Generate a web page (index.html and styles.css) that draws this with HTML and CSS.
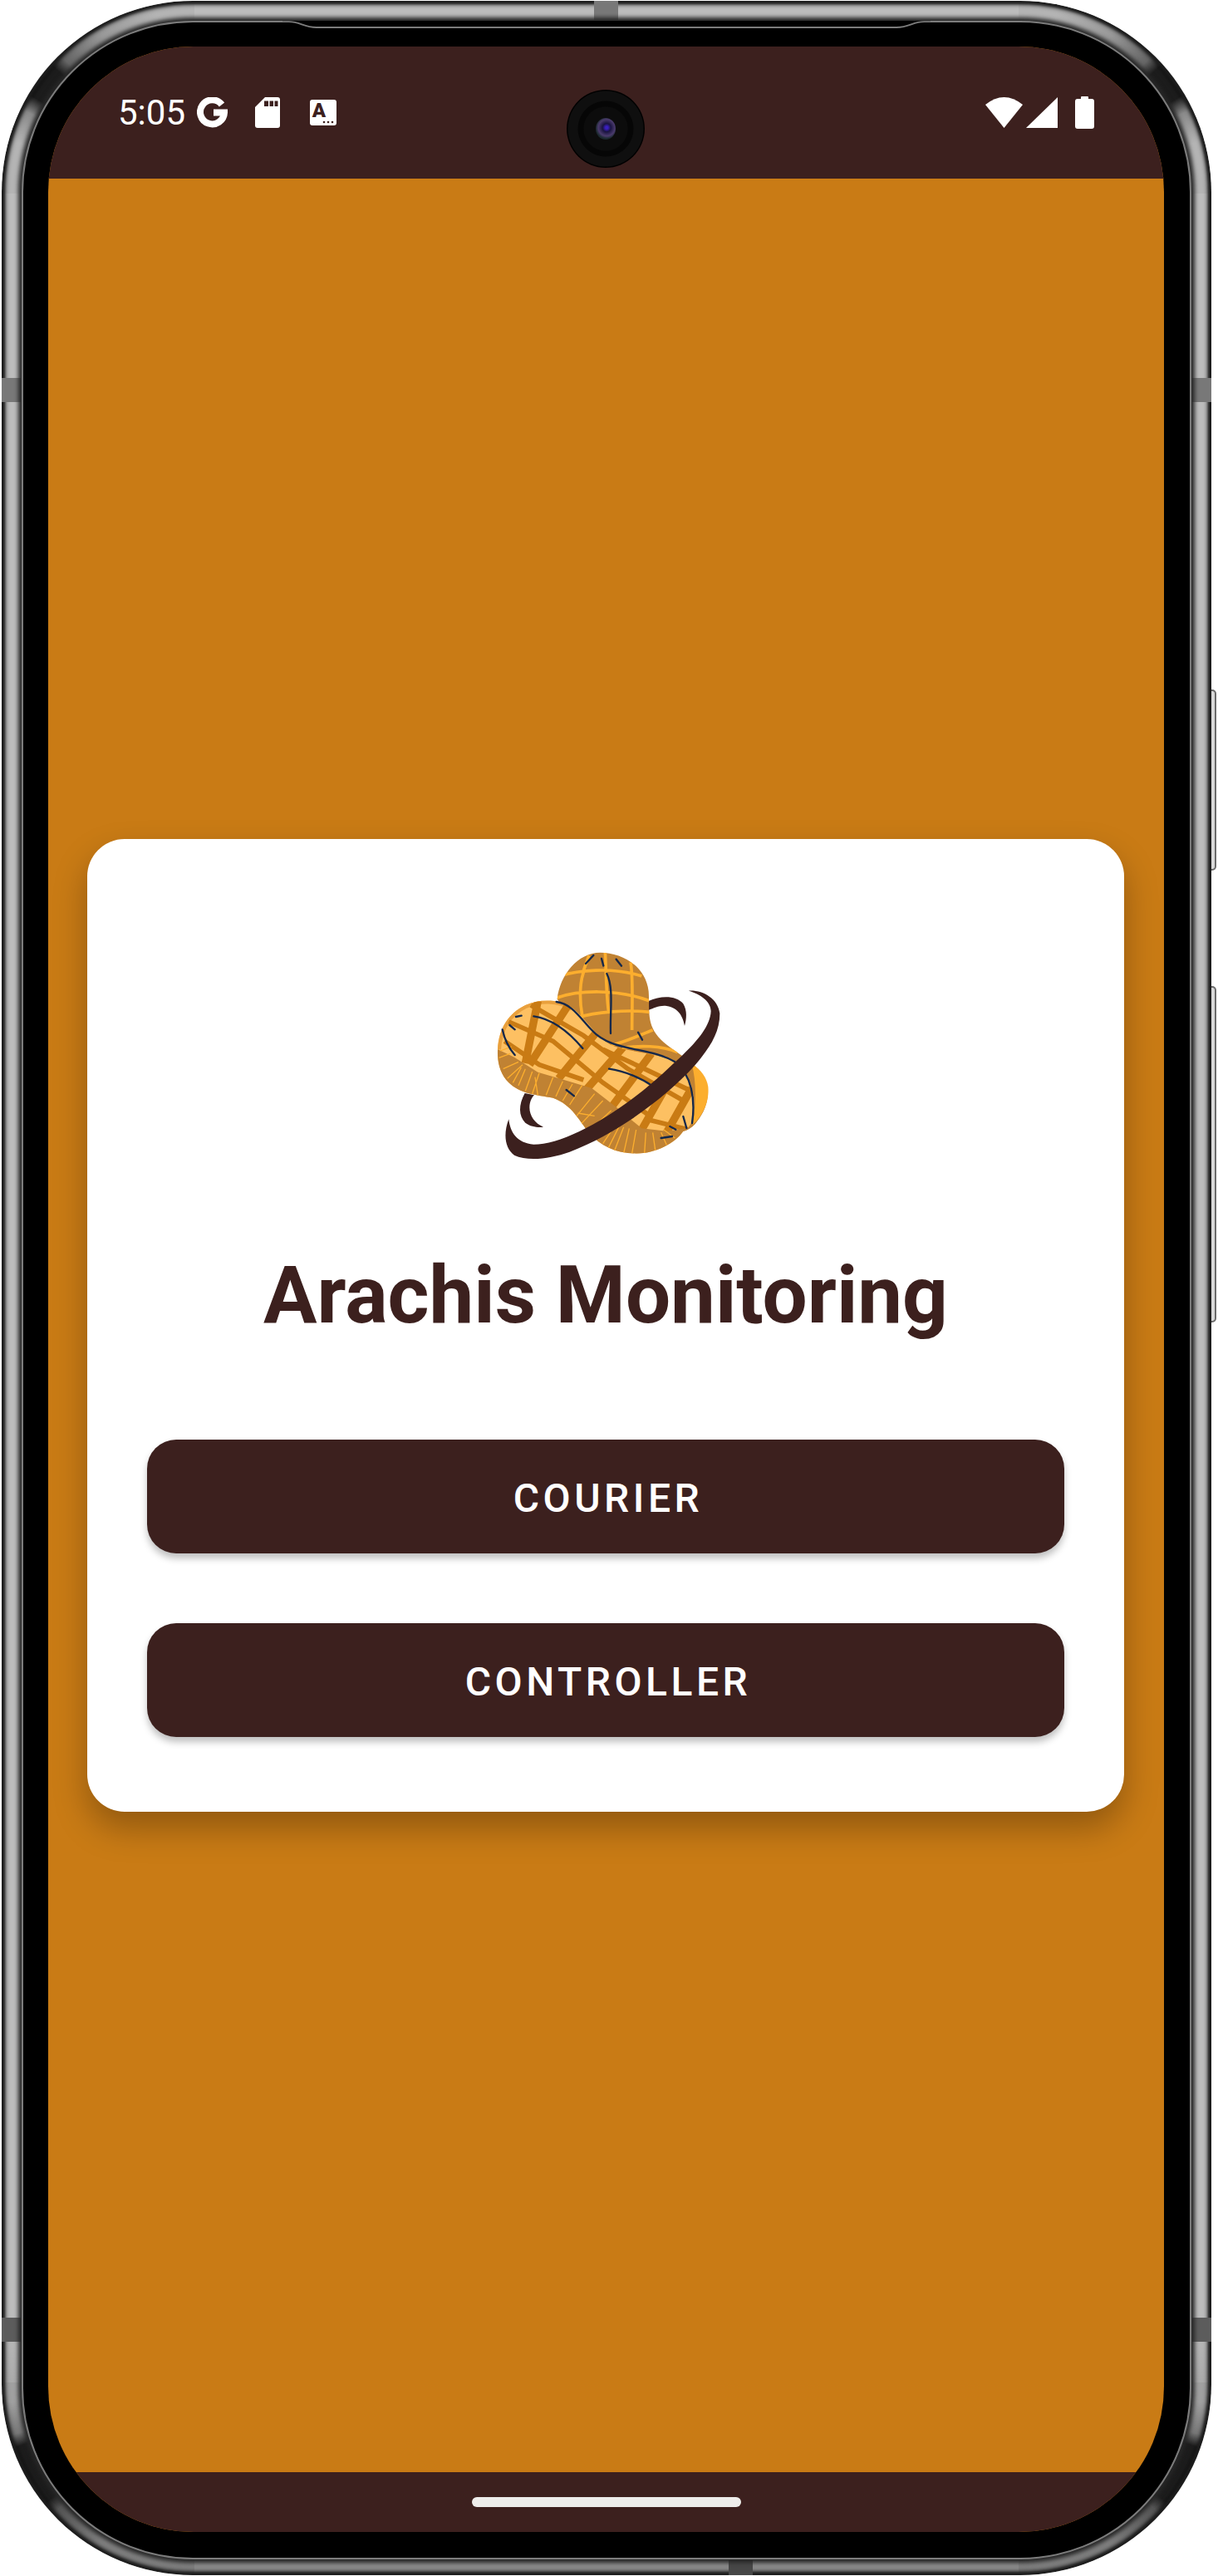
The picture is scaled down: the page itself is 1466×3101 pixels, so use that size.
FILE: index.html
```html
<!DOCTYPE html>
<html lang="en">
<head>
  <meta charset="UTF-8" />
  <title>Arachis Monitoring</title>
  <link rel="stylesheet" href="styles.css">
</head>
<body>

  <div class="phone">
    <!-- side buttons and antenna bands sit on the metal rim -->
    <span class="side-btn side-btn-power"></span>
    <span class="side-btn side-btn-volume"></span>
    <span class="band band-top"></span>
    <span class="band band-bottom"></span>
    <span class="band band-left band-upper"></span>
    <span class="band band-left band-lower"></span>
    <span class="band band-right band-upper"></span>
    <span class="band band-right band-lower"></span>

    <div class="bezel">
      <svg class="notch" viewBox="0 0 800 10">
        <path class="notch-hide" d="M0 1H800" />
        <path class="notch-line" d="M0 1H8C22 1 26 8 42 8H758C774 8 778 1 792 1H800" />
      </svg>

      <div class="screen">
        <div class="status-bar">
          <div class="status-left">
            <span class="time">5:05</span>
            <svg class="ic-g" viewBox="0 0 37 38">
              <path d="M30 9A14.5 14.5 0 1 0 33 18.5H20" />
            </svg>
            <svg class="ic-sd" viewBox="0 0 30 37">
              <path d="M12 0H27a3 3 0 0 1 3 3V34a3 3 0 0 1-3 3H3a3 3 0 0 1-3-3V12Z" />
              <path class="cut" d="M11 4.5h5V11h-5ZM17.500 4.500h4.500V11h-4.500ZM23.500 4.500h4V11h-4Z" />
            </svg>
            <svg class="ic-a" viewBox="0 0 32 31">
              <rect width="32" height="31" rx="3" />
              <text x="11" y="21" class="ic-a-letter">A</text>
              <circle cx="17" cy="27" r="1.300" />
              <circle cx="22" cy="27" r="1.300" />
              <circle cx="27" cy="27" r="1.300" />
            </svg>
          </div>

          <div class="camera"><span class="lens"></span></div>

          <div class="status-right">
            <svg class="ic-wifi" viewBox="0 0 45 37">
              <path d="M0 9Q22.500-9 45 9L22.500 37Z" />
            </svg>
            <svg class="ic-signal" viewBox="0 0 38 37">
              <path d="M38 0V37H0Z" />
            </svg>
            <svg class="ic-battery" viewBox="0 0 23 39">
              <path d="M7 3V1a1 1 0 0 1 1-1H15a1 1 0 0 1 1 1V3H20a3 3 0 0 1 3 3V36a3 3 0 0 1-3 3H3a3 3 0 0 1-3-3V6a3 3 0 0 1 3-3Z" />
            </svg>
          </div>
        </div>

        <main class="content">
          <div class="card">
            <svg class="logo" viewBox="0 0 960 870">
              <defs>
                <clipPath id="backClip">
                  <path d="M305 218C315 130 380 50 460 50C540 50 625 100 635 190C640 260 625 310 680 365C720 405 800 440 835 500C860 550 850 610 810 660C790 690 760 700 730 700L500 500Z" />
                </clipPath>
                <clipPath id="frontClip">
                  <path d="M90 400C95 320 130 270 190 240C240 218 310 215 360 250C410 290 440 350 500 385C560 410 650 410 720 440C770 470 800 530 800 600C800 650 790 680 760 695C730 740 660 775 590 776C520 776 460 750 420 700C385 660 360 600 290 575C230 565 170 560 130 520C100 490 88 450 90 400Z" />
                </clipPath>
              </defs>

              <!-- back ring pieces -->
              <path class="ring" d="M635 225C680 205 735 205 760 235C775 260 772 290 765 315C760 285 745 250 700 243C675 240 655 250 635 258Z" />
              <path class="ring" d="M188 558C165 600 165 640 190 665C210 680 235 682 255 680C225 668 205 640 205 610C205 590 212 575 222 565Z" />

              <!-- back shell -->
              <path class="shell-back" d="M305 218C315 130 380 50 460 50C540 50 625 100 635 190C640 260 625 310 680 365C720 405 800 440 835 500C860 550 850 610 810 660C790 690 760 700 730 700L500 500Z" />
              <path class="shell-rim" d="M790 450C825 475 845 500 850 535C855 590 830 640 795 672C805 600 810 520 790 450Z" />
              <g clip-path="url(#backClip)">
                <path class="lattice-back" d="M310 135C380 115 500 100 610 135M300 215C380 185 520 180 640 225M380 285C440 265 560 255 640 265M500 385C560 370 610 345 650 330M540 395C600 385 680 385 740 410M405 110C385 150 385 220 395 275M478 50C482 100 480 180 490 260M570 85C580 140 575 230 575 330M420 60L400 115" />
              </g>

              <!-- front shell -->
              <g clip-path="url(#frontClip)">
                <rect class="shell-front" width="960" height="870" />
                <path class="shell-edge" d="M90 400C95 320 130 270 190 240C240 218 310 215 360 250" />
                <path class="lattice-front" d="M235 225L190 450M345 240L205 455M445 340L310 505M545 390L410 545M645 415L500 610M735 470L610 690M790 540L700 700" />
                <path class="lattice-thin" d="M130 300L290 370L470 520L640 640M210 240L400 350L560 470L770 590M115 370L240 455L400 510M470 400L620 470L810 560M620 650L780 690" />
                <path class="shell-lower" d="M80 395L150 428L235 482L330 510L430 540L520 610L610 685L700 695L800 680L800 790L400 790L300 600L60 590Z" />
                <path class="hatch" d="M100 405L140 390M95 430L135 415M110 470L165 445M125 505L180 455M145 520L175 465M165 530L190 470M190 550L215 480M215 560L240 485M235 565L225 500M265 565L290 500M300 570L325 515M325 585L360 525M350 600L395 530M375 640L440 560M390 670L470 585M415 700L500 620M380 630L440 640M470 740L530 650M490 755L535 665M510 770L545 680M545 775L565 685M575 775L590 690M620 775L625 700M660 770L650 700M700 745L680 700M730 720L690 690" />
              </g>

              <!-- seam lines -->
              <path class="seam" d="M436 60L408 90M465 72L472 98M518 74L537 98M484 126C510 180 495 260 498 342M597 338L612 365M302 228C360 235 390 290 430 330C500 410 640 390 730 445C790 490 805 580 792 666M220 280C290 290 350 340 397 396M107 328C115 365 130 395 152 420M133 312L152 328M156 282L176 278M492 470C550 478 610 505 650 533M338 546L366 568M760 642L772 684M712 678L733 689M680 720L720 714" />

              <!-- front ring -->
              <path class="ring" d="M780 188C830 185 885 215 892 270C892 345 850 400 800 460C700 570 530 700 350 770C280 795 200 805 150 782C115 755 110 705 130 652C135 700 160 738 220 743C340 743 550 620 720 455C800 385 858 320 860 262C860 225 820 200 780 188Z" />
            </svg>

            <h1 class="title">Arachis Monitoring</h1>

            <button class="role-btn">COURIER</button>
            <button class="role-btn">CONTROLLER</button>
          </div>
        </main>

        <div class="nav-bar"><span class="home-pill"></span></div>
      </div>
    </div>
  </div>

</body>
</html>
```

FILE: styles.css
```css
html, body {
  margin: 0;
  background-color: #fff;
}

body {
  font-family: Roboto, sans-serif;
}

/* Phone frame */
.phone {
  position: relative;
  box-sizing: border-box;
  width: 1456px;
  height: 3099px;
  margin: 1px 8px 1px 2px;
  padding: 24px 24px 19px 24px;
  border-radius: 230px;
  background:
    conic-gradient(from 270deg at 100% 100%, #b4b4b4 0 16deg, #8a8a8a 26deg, #1c1c1c 31deg 42deg, #666 46deg, #999 60deg, #b4b4b4 78deg 90deg) top left / 232px 232px no-repeat,
    conic-gradient(from 0deg at 0 100%, #b4b4b4 0 12deg, #999 30deg, #666 44deg, #1c1c1c 48deg 59deg, #8a8a8a 64deg, #b4b4b4 74deg 90deg) top right / 232px 232px no-repeat,
    conic-gradient(from 180deg at 100% 0, #7e7e7e 0 30deg, #555 47deg, #1c1c1c 51deg 70deg, #777 74deg, #a0a0a0 84deg 90deg) bottom left / 232px 232px no-repeat,
    conic-gradient(from 90deg at 0 0, #a0a0a0 0 6deg, #777 16deg, #1c1c1c 20deg 39deg, #555 43deg, #7e7e7e 60deg 90deg) bottom right / 232px 232px no-repeat,
    linear-gradient(180deg, #bcbcbc 0, #bcbcbc 90%, #8a8a8a 97%);
  box-shadow: inset 0 0 3px 4px #1d1d1d, inset 0 0 4px 6px rgba(0, 0, 0, 0.35);
}

.side-btn {
  position: absolute;
  right: -6px;
  width: 6px;
  box-sizing: border-box;
  border: 2px solid #6a6a6a;
  border-left: none;
  border-radius: 0 5px 5px 0;
  background-color: #d8d8d8;
}

.side-btn-power {
  top: 829px;
  height: 218px;
}

.side-btn-volume {
  top: 1186px;
  height: 405px;
}

.band {
  position: absolute;
  background-color: #787878;
}

.band-top {
  top: 0;
  left: 713px;
  width: 29px;
  height: 23px;
}

.band-bottom {
  bottom: 0;
  left: 875px;
  width: 29px;
  height: 18px;
  background-color: #474747;
}

.band-left {
  left: 0;
  width: 23px;
}

.band-right {
  right: 0;
  width: 23px;
}

.band-upper {
  top: 454px;
  height: 29px;
}

.band-lower {
  top: 2789px;
  height: 29px;
  background-color: #5c5c5c;
}

.bezel {
  position: relative;
  z-index: 1;
  box-sizing: border-box;
  height: 100%;
  padding: 29px 31px 31px 30px;
  border: 2px solid #7c7c7c;
  border-radius: 206px;
  background-color: #000;
  box-shadow: 0 0 5px 4px #262626;
}

.notch {
  position: absolute;
  top: -2px;
  left: 312px;
  width: 780px;
  height: 10px;
}

.notch-hide {
  fill: none;
  stroke: #000;
  stroke-width: 3;
}

.notch-line {
  fill: none;
  stroke: #7c7c7c;
  stroke-width: 2;
}

/* Screen */
.screen {
  display: flex;
  flex-direction: column;
  height: 2992px;
  overflow: hidden;
  border-radius: 175px;
  background-color: #c97b15;
}

.status-bar {
  position: relative;
  display: flex;
  flex: none;
  align-items: center;
  justify-content: space-between;
  height: 159px;
  padding: 0 84px 0 84px;
  box-sizing: border-box;
  background-color: #3c201e;
}

.status-left,
.status-right {
  display: flex;
  align-items: center;
}

.status-bar svg {
  display: block;
  fill: #fff;
}

.time {
  color: #fff;
  font-size: 42px;
  line-height: 42px;
}

.ic-g {
  width: 37px;
  height: 38px;
  margin-left: 14px;
}

.status-bar .ic-g {
  fill: none;
}

.ic-g path {
  stroke: #fff;
  stroke-width: 8;
}

.ic-sd {
  width: 30px;
  height: 37px;
  margin-left: 33px;
}

.status-bar .cut {
  fill: #3c201e;
}

.ic-a {
  width: 32px;
  height: 31px;
  margin-left: 36px;
}

.ic-a circle {
  fill: #3c201e;
}

.ic-a-letter {
  font-family: Roboto, sans-serif;
  font-size: 24px;
  font-weight: 900;
  fill: #3c201e;
  text-anchor: middle;
}

.ic-wifi {
  width: 45px;
  height: 37px;
}

.ic-signal {
  width: 38px;
  height: 37px;
  margin-left: 4px;
}

.ic-battery {
  width: 23px;
  height: 39px;
  margin-left: 21px;
}

.camera {
  position: absolute;
  top: 52px;
  left: 624px;
  display: flex;
  align-items: center;
  justify-content: center;
  width: 94px;
  height: 94px;
  border-radius: 50%;
  background: radial-gradient(circle, #0c0c0c 0 26px, #060606 27px 33px, #0f0f0f 34px 45px, #000 46px);
}

.lens {
  width: 24px;
  height: 26px;
  border-radius: 50%;
  background: radial-gradient(circle at 55% 45%, #3a1fc0 0 1.5px, #1a1440 5px, #4a3a6c 10px, #1c2a30 13px);
}

.content {
  display: flex;
  flex: 1;
  align-items: center;
  justify-content: center;
  padding-right: 1px;
}

.card {
  box-sizing: border-box;
  display: flex;
  flex-direction: column;
  align-items: center;
  width: 1248px;
  height: 1171px;
  padding: 120px 72px 90px 72px;
  border-radius: 45px;
  background-color: #fff;
  box-shadow: 0 20px 40px rgba(0, 0, 0, 0.28);
}

.logo {
  display: block;
  flex: none;
  width: 320px;
  height: 290px;
}

.ring {
  fill: #3c201e;
}

.shell-back {
  fill: #c08233;
}

.shell-rim {
  fill: #fcae2e;
}

.lattice-back {
  fill: none;
  stroke: #fcae2e;
  stroke-width: 11;
}

.shell-front {
  fill: #fdc062;
}

.shell-edge {
  fill: none;
  stroke: #e9a03d;
  stroke-width: 24;
}

.lattice-front {
  fill: none;
  stroke: #c97b14;
  stroke-width: 28;
}

.lattice-thin {
  fill: none;
  stroke: #c97b14;
  stroke-width: 17;
}

.shell-lower {
  fill: #c08233;
}

.hatch {
  fill: none;
  stroke: #fcae2e;
  stroke-width: 4;
}

.seam {
  fill: none;
  stroke: #14284b;
  stroke-width: 7;
  stroke-linecap: round;
}

.title {
  margin: 74px 0 109px 0;
  color: #3c201e;
  font-size: 96px;
  font-weight: 700;
  line-height: 130px;
  white-space: nowrap;
}

.role-btn {
  flex: none;
  width: 100%;
  height: 137px;
  padding: 3px 0 0 6px;
  border: none;
  border-radius: 35px;
  background-color: #3c201e;
  color: #fff;
  font-family: Roboto, sans-serif;
  font-size: 48px;
  font-weight: 500;
  letter-spacing: 4.5px;
  box-shadow: 0 6px 9px rgba(0, 0, 0, 0.25);
}

.role-btn + .role-btn {
  margin-top: 84px;
}

.nav-bar {
  display: flex;
  flex: none;
  align-items: center;
  justify-content: center;
  height: 72px;
  background-color: #3c201e;
}

.home-pill {
  width: 324px;
  height: 12px;
  border-radius: 6px;
  background-color: #eeedeb;
}
```
